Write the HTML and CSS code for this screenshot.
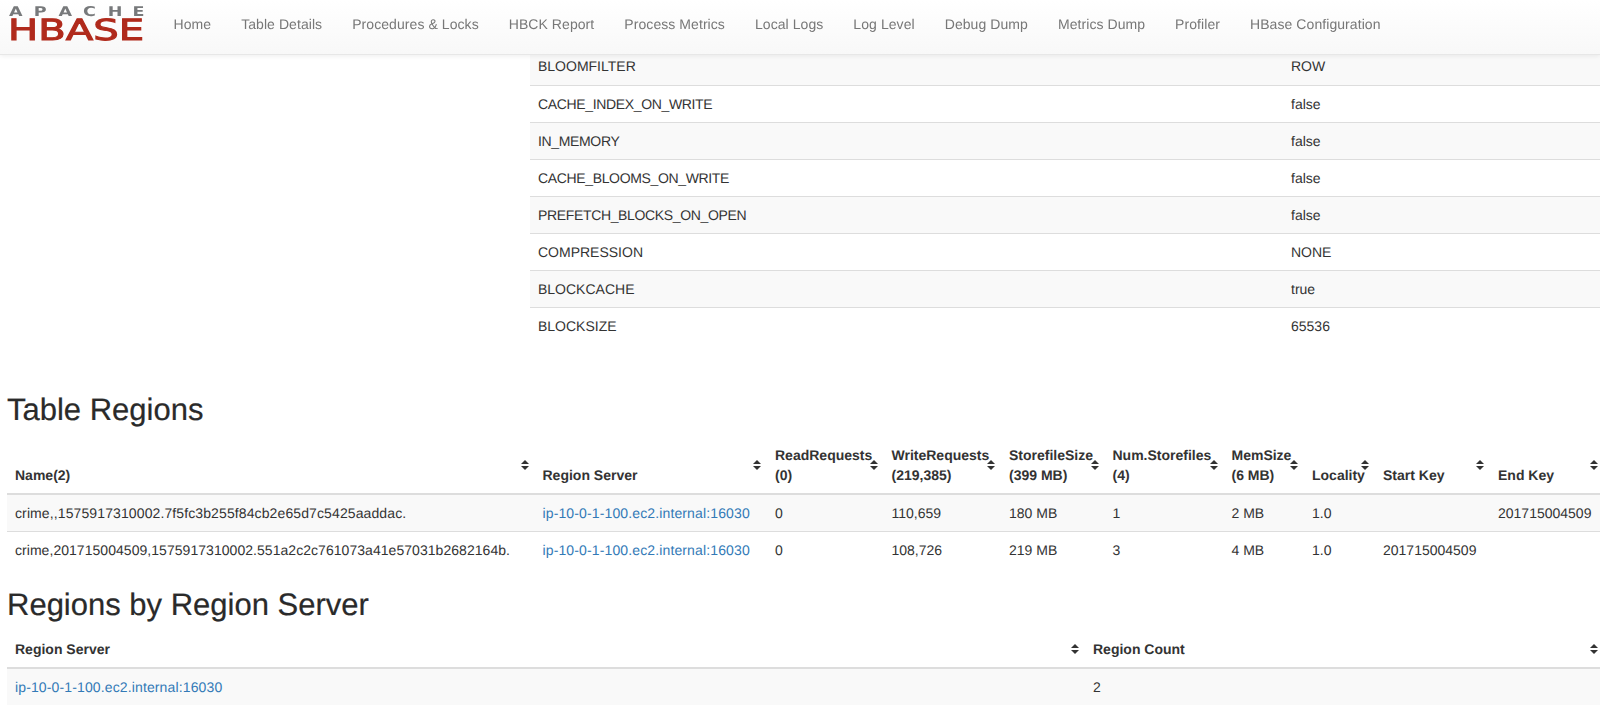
FILE: index.html
```html
<!DOCTYPE html>
<html lang="en">
<head>
<meta charset="utf-8">
<title>Table: crime</title>
<link rel="stylesheet" href="styles.css">
</head>
<body>
<nav class="navbar">
  <a class="brand" href="#">
    <svg class="logo" width="138" height="44" viewBox="0 0 138 44" xmlns="http://www.w3.org/2000/svg">
      <text class="logo-apache" transform="scale(1.3 1)" x="0 19 38 57 76 95" y="13.2">APACHE</text>
      <text class="logo-hbase" x="-1" y="36.5" textLength="136" lengthAdjust="spacingAndGlyphs">HBASE</text>
    </svg>
  </a>
  <ul class="nav">
    <li><a href="#">Home</a></li>
    <li><a href="#">Table Details</a></li>
    <li><a href="#">Procedures &amp; Locks</a></li>
    <li><a href="#">HBCK Report</a></li>
    <li><a href="#">Process Metrics</a></li>
    <li><a href="#">Local Logs</a></li>
    <li><a href="#">Log Level</a></li>
    <li><a href="#">Debug Dump</a></li>
    <li><a href="#">Metrics Dump</a></li>
    <li><a href="#">Profiler</a></li>
    <li><a href="#">HBase Configuration</a></li>
  </ul>
</nav>
<main class="page">
  <div class="schema">
    <table class="table striped">
      <colgroup><col class="s1"><col class="s2"></colgroup>
      <tbody>
        <tr><td>BLOOMFILTER</td><td>ROW</td></tr>
        <tr><td class="attr">CACHE_INDEX_ON_WRITE</td><td>false</td></tr>
        <tr><td class="attr">IN_MEMORY</td><td>false</td></tr>
        <tr><td class="attr">CACHE_BLOOMS_ON_WRITE</td><td>false</td></tr>
        <tr><td class="attr">PREFETCH_BLOCKS_ON_OPEN</td><td>false</td></tr>
        <tr><td>COMPRESSION</td><td>NONE</td></tr>
        <tr><td>BLOCKCACHE</td><td>true</td></tr>
        <tr><td>BLOCKSIZE</td><td>65536</td></tr>
      </tbody>
    </table>
  </div>

  <h2>Table Regions</h2>
  <table class="table striped wide">
    <colgroup>
      <col class="c1"><col class="c2"><col class="c3"><col class="c4"><col class="c5">
      <col class="c6"><col class="c7"><col class="c8"><col class="c9"><col class="c10">
    </colgroup>
    <thead>
      <tr>
        <th>Name(2)<span class="sort"></span></th>
        <th>Region Server<span class="sort"></span></th>
        <th>ReadRequests<br>(0)<span class="sort"></span></th>
        <th>WriteRequests<br>(219,385)<span class="sort"></span></th>
        <th>StorefileSize<br>(399 MB)<span class="sort"></span></th>
        <th>Num.Storefiles<br>(4)<span class="sort"></span></th>
        <th>MemSize<br>(6 MB)<span class="sort"></span></th>
        <th>Locality<span class="sort"></span></th>
        <th>Start Key<span class="sort"></span></th>
        <th>End Key<span class="sort"></span></th>
      </tr>
    </thead>
    <tbody>
      <tr>
        <td class="name-a">crime,,1575917310002.7f5fc3b255f84cb2e65d7c5425aaddac.</td>
        <td><a href="#">ip-10-0-1-100.ec2.internal:16030</a></td>
        <td>0</td><td>110,659</td><td>180 MB</td><td>1</td><td>2 MB</td><td>1.0</td><td></td><td>201715004509</td>
      </tr>
      <tr>
        <td class="name-b">crime,201715004509,1575917310002.551a2c2c761073a41e57031b2682164b.</td>
        <td><a href="#">ip-10-0-1-100.ec2.internal:16030</a></td>
        <td>0</td><td>108,726</td><td>219 MB</td><td>3</td><td>4 MB</td><td>1.0</td><td>201715004509</td><td></td>
      </tr>
    </tbody>
  </table>

  <h2>Regions by Region Server</h2>
  <table class="table striped wide">
    <colgroup><col class="r1"><col class="r2"></colgroup>
    <thead>
      <tr>
        <th>Region Server<span class="sort"></span></th>
        <th>Region Count<span class="sort"></span></th>
      </tr>
    </thead>
    <tbody>
      <tr>
        <td><a href="#">ip-10-0-1-100.ec2.internal:16030</a></td>
        <td>2</td>
      </tr>
    </tbody>
  </table>
</main>
</body>
</html>
```
FILE: styles.css
```css
* { box-sizing: border-box; }
html, body { margin: 0; padding: 0; overflow: hidden; height: 716px; }
body {
  font-family: "Liberation Sans", Arial, sans-serif;
  font-size: 14px;
  line-height: 20px;
  color: #333;
  background: #fff;
  text-rendering: geometricPrecision;
}
a { color: #337ab7; text-decoration: none; }
td a { letter-spacing: .13px; }

.navbar {
  position: fixed;
  top: 0; left: 0; right: 0;
  z-index: 10;
  height: 55px;
  display: flex;
  align-items: flex-start;
  background: linear-gradient(to bottom, #fff 0, #f8f8f8 100%);
  border-bottom: 1px solid #e7e7e7;
  box-shadow: 0 1px 5px rgba(0, 0, 0, .075);
}
.brand { display: block; margin: 3px 0 0 9px; width: 134px; height: 44px; flex: none; }
.logo { display: block; }
.logo-apache { font: 700 13.5px "DejaVu Sans", sans-serif; fill: #77797b; }
.logo-hbase { font: 400 29px "DejaVu Sans", sans-serif; fill: #b02a1c; stroke: #b02a1c; stroke-width: 1px; }
.nav { display: flex; list-style: none; margin: 0 0 0 15.5px; padding: 0; }
.nav a { display: block; padding: 14px 15px 16px; color: #777; white-space: nowrap; letter-spacing: .07px; }

.page { padding: 48px 0 0 7px; width: 1604px; }
.schema { padding-left: 523px; margin-bottom: 49px; }

.table { border-collapse: collapse; border-spacing: 0; table-layout: fixed; width: 100%; }
.schema .table { width: 1074px; }
.wide { width: 1597px; margin-bottom: 0; }
.table th, .table td { padding: 8px; text-align: left; vertical-align: top; }
.table td { border-top: 1px solid #ddd; white-space: nowrap; }
.table tbody tr:first-child td { border-top: 0; }
.table th { position: relative; vertical-align: bottom; border-bottom: 2px solid #ddd; font-weight: 700; white-space: nowrap; }
.striped tbody tr:nth-child(odd) { background: #f9f9f9; }
.schema tbody tr:first-child td { padding-top: 8px; padding-bottom: 9px; }
.table td.attr { letter-spacing: -.35px; }
.table td.name-a { letter-spacing: .11px; }
.table td.name-b { letter-spacing: .045px; }

h2 { font-size: 31px; line-height: 33px; font-weight: 500; color: #2a2a2a; margin: 20px 0 10.5px; -webkit-text-stroke: .2px #2a2a2a; }

.s1 { width: 753px; }
.s2 { width: 321px; }
.c1 { width: 527.5px; }
.c2 { width: 232.5px; }
.c3 { width: 116.5px; }
.c4 { width: 117.5px; }
.c5 { width: 103.5px; }
.c6 { width: 119px; }
.c7 { width: 80.5px; }
.c8 { width: 71px; }
.c9 { width: 115px; }
.c10 { width: 114px; }
.r1 { width: 1078px; }
.r2 { width: 519px; }

.sort {
  position: absolute;
  right: 6px;
  top: 50%;
  width: 8px;
  height: 10px;
  margin-top: -5px;
}
.sort::before, .sort::after {
  content: "";
  position: absolute;
  left: 0;
  border-left: 4px solid transparent;
  border-right: 4px solid transparent;
}
.sort::before { top: 0; border-bottom: 4.5px solid #333; }
.sort::after { bottom: 0; border-top: 4.5px solid #333; }
```
